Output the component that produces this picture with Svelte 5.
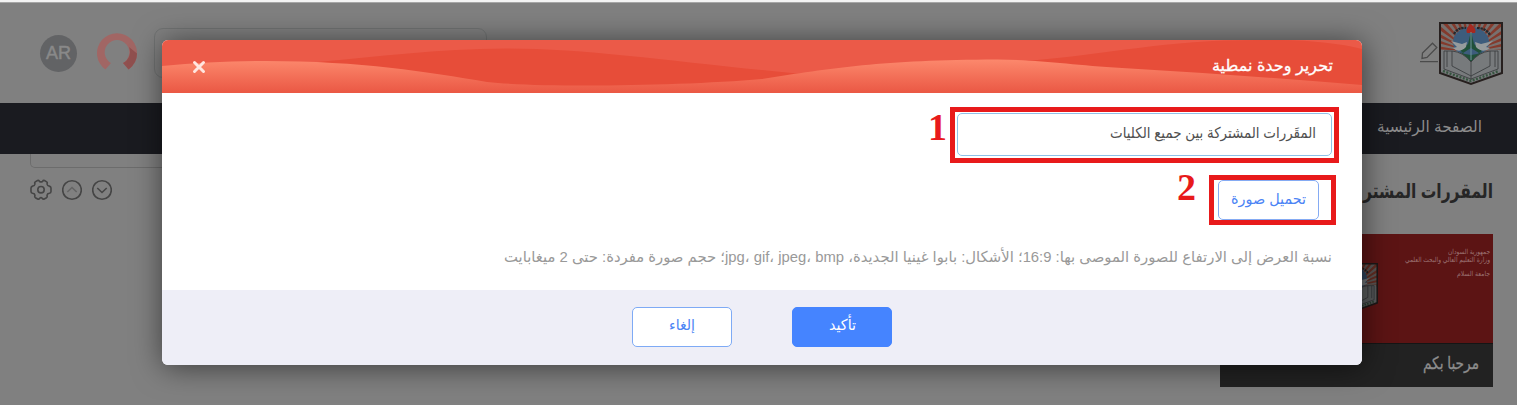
<script>
  const fileHint =
    'نسبة العرض إلى الارتفاع للصورة الموصى بها: 16:9؛ الأشكال: بابوا غينيا الجديدة، jpg، gif، jpeg، bmp؛ حجم صورة مفردة: حتى 2 ميغابايت';
  const courseName = 'المقَررات المشتركة بين جميع الكليات';
  const rays = Array.from({ length: 19 }, (_, i) => {
    const a = Math.PI * (i / 18);
    const b = a + 0.085;
    return `M32 30 L${32 + 50 * Math.cos(a)} ${30 - 50 * Math.sin(a)} L${32 + 50 * Math.cos(b)} ${30 - 50 * Math.sin(b)}Z`;
  }).join('');
</script>

{#snippet label(text, width, size, height, base)}
  <svg class="label" {width} {height} viewBox="0 0 {width} {height}">
    <text x={width} y={base} font-size={size} textLength={width} lengthAdjust="spacingAndGlyphs">{text}</text>
  </svg>
{/snippet}

{#snippet emblem()}
  <svg class="emblem" width="64" height="64" viewBox="0 0 64 64">
    <clipPath id="shield"><path d="M1 1H63V51L32 62 1 51Z" /></clipPath>
    <g clip-path="url(#shield)">
      <rect width="64" height="64" fill="#77716f" />
      <path d={rays} fill="#843a2c" />
      <ellipse cx="32" cy="20" rx="18" ry="15" fill="#3d5c7c" />
      <path d="M15 12Q19 5 27 6M38 6Q47 6 51 13" fill="none" stroke="#22282e" stroke-width="2.2" stroke-dasharray="2.4 .8" />
      <path d="M32 9L35 22 43 29 40 31 32 26 24 31 21 28 29 22Z" fill="#205039" />
      <path d="M21 30Q32 36 43 30L32 41Z" fill="#205039" />
      <path d="M28 11Q26 6 32 2 38 7 36 11Z" fill="#a52920" />
      <path d="M12 19L23 22 28 20 27 25Q20 32 14 26L18 25ZM54 19L42 22 36 20 37 25Q44 32 51 26L47 25Z" fill="#969b9d" />
      <path d="M32 10V38" stroke="#71949b" />
      <path d="M2 28H13Q24 30 32 40 40 30 51 28H62V51L32 62 2 51Z" fill="#777a7c" />
      <path d="M5 29V47L32 57M8 29V45M13 29V44L32 54M5 29H13Q24 30 32 40 40 30 51 29H59V47L32 57M56 29V45M51 29V44L32 54M32 40V58" fill="none" stroke="#3c3f42" stroke-width=".9" />
      <path d="M4 49L32 59 60 49" fill="none" stroke="#36543f" stroke-width="2.4" stroke-dasharray="2 1.5" />
    </g>
    <path d="M1 1H63V51L32 62 1 51Z" fill="none" stroke="#27201f" stroke-width="2" />
  </svg>
{/snippet}

<div class="page">
  <div class="strip"></div>
  <header>
    <div class="avatar">AR</div>
    <svg class="ring" width="40" height="38" viewBox="0 0 40 38">
      <path d="M8.4 36.5A20 20 0 1 1 31.6 36.5L26 30A12.3 12.3 0 1 0 14 30Z" fill="#a16664" />
      <path d="M32 14A12.3 12.3 0 0 1 26 30L31.6 36.5Q40 30 40 20.5Z" fill="#90504f" />
    </svg>
    <div class="search"></div>
    <div class="brand">
      <svg class="pencil" width="19" height="21" viewBox="0 0 19 21">
        <path d="M2 16.5L2.5 11 12.5 1.2 16.8 5.5 7 15.5ZM0 19.7H18" fill="none" stroke="#4b4b4b" stroke-width="1.3" />
      </svg>
      {@render emblem()}
    </div>
  </header>
  <nav>{@render label('الصفحة الرئيسية', 105, 16, 32, 19)}</nav>
  <div class="panel"></div>
  <div class="section">
    <div class="tools">
      <svg width="22" height="22" viewBox="0 0 22 22">
        <path d="M7.5 1.5Q9 1 9.4 2.3Q11 3.6 12.6 2.3Q13.2 1 14.5 1.5L16.7 2.8Q17.7 3.5 17 5Q17.3 7 19.3 7.1Q21 7.5 21 9V12.5Q21 14 19.3 14.3Q17.2 14.5 17 16.3Q17.6 18 16.5 18.7L14.3 20Q13 20.5 12.2 19.3Q11 18 9.7 19.3Q9 20.5 7.6 20L5.4 18.7Q4.3 18 5 16.3Q4.8 14.5 2.6 14.3Q1 14 1 12.5V9Q1 7.5 2.6 7.1Q4.7 7 5 5Q4.3 3.5 5.3 2.8Z" />
        <circle cx="11" cy="10.7" r="3.2" />
      </svg>
      <svg width="20" height="22" viewBox="0 0 20 22"><circle cx="10" cy="11" r="9.3" /><path class="faint" d="M5.3 13L10 8.5 14.7 13" /></svg>
      <svg width="20" height="22" viewBox="0 0 20 22"><circle cx="10" cy="11" r="9.3" /><path d="M5.3 9L10 13.5 14.7 9" /></svg>
    </div>
    <h1>{@render label('المقررات المشتر', 130, 20, 36, 24)}</h1>
  </div>
  <article>
    <div class="cover">
      <div class="seal">{@render emblem()}</div>
      <div class="lines">
        {@render label('جمهورية السودان', 42, 7, 8, 6)}
        {@render label('وزارة التعليم العالي والبحث العلمي', 85, 7, 14, 6)}
        {@render label('جامعة السلام', 33, 7, 10, 6)}
      </div>
    </div>
    <div class="caption">{@render label('مرحبا بكم', 56, 17, 40, 25)}</div>
  </article>
</div>

<div class="dialog">
  <div class="titlebar">
    <svg class="waves" width="1200" height="53" viewBox="0 0 1200 53">
      <defs>
        <linearGradient id="glow" gradientUnits="userSpaceOnUse" x1="0" y1="19" x2="0" y2="52">
          <stop offset="0" stop-color="#fc896d" /><stop offset="1" stop-color="#eb5945" />
        </linearGradient>
      </defs>
      <path d="M155 22C215 17 275 8.5 344 8.5C430 8.5 520 23 640 34V46H350L165 23Z" fill="#e74d39" />
      <path d="M865 21C950 14 1000 0 1097 0Q1160 -1 1200 9V50H900Z" fill="#e74d39" />
      <path d="M0 26Q50 21 103 21C200 21 265 32 325 42C380 48 520 46 600 39C670 28 720 20 835 19.5C880 20 910 25 960 28Q1080 35 1200 45V53H0Z" fill="url(#glow)" />
    </svg>
    <svg class="close" width="14" height="14" viewBox="0 0 14 14"><path d="M2.5 2.5L11.5 11.5M11.5 2.5L2.5 11.5" /></svg>
    {@render label('تحرير وحدة نمطية', 121, 16, 34, 23)}
  </div>
  <div class="body">
    <div class="field">
      {@render label(courseName, 206, 15, 34, 19)}
      <div class="mark mark-field"></div>
      <b class="step step-one">1</b>
    </div>
    <div class="upload">
      {@render label('تحميل صورة', 75, 15, 34, 19)}
      <div class="mark mark-upload"></div>
      <b class="step step-two">2</b>
    </div>
    <div class="hint">{@render label(fileHint, 828, 15, 26, 18)}</div>
  </div>
  <footer>
    <div class="btn">{@render label('إلغاء', 26, 15, 34, 21)}</div>
    <div class="btn primary">{@render label('تأكيد', 27, 15, 34, 21)}</div>
  </footer>
</div>

<style>
  :global(body) { background: #808080; overflow: hidden; }
  * { box-sizing: border-box; }
  .label { display: block; overflow: visible; flex: none; fill: currentColor; direction: rtl; font-family: "Liberation Sans", "DejaVu Sans", sans-serif; }
  .page { width: 1517px; height: 405px; overflow: hidden; background: #808080; font-family: "Liberation Sans", Arial, sans-serif; }
  .strip { height: 3px; background: #f3f3f3; border-bottom: 1px solid #a6a6a6; }
  header { height: 100px; display: flex; padding: 19px 14px 0 40px; }
  .avatar { width: 37px; height: 37px; margin-top: 13px; border-radius: 50%; background: #626365; color: #898989; font-size: 18px; line-height: 36px; text-align: center; -webkit-text-stroke: .5px #898989; }
  .ring { margin: 11px 0 0 20px; }
  .search { width: 333px; height: 50px; margin: 6px 0 0 17px; border: 1px solid #717373; border-radius: 9px; }
  .brand { display: flex; margin-left: auto; }
  .pencil { margin: 20px 0 0; }
  .emblem { display: block; flex: none; }
  nav { height: 51px; background: #1a1b20; color: #8c8c8c; display: flex; justify-content: flex-end; padding: 10px 35px 0 0; }
  .panel { height: 14px; margin: 0 24px 0 30px; border: 1px solid #6c6c6c; border-top: 0; border-radius: 0 0 5px 5px; }
  .panel { width: 600px; }
  .section { display: flex; justify-content: space-between; height: 66px; padding: 6px 24px 0 30px; }
  .tools { display: flex; gap: 10px; padding-top: 5px; }
  .tools svg { fill: none; stroke: #454545; stroke-width: 1.6; }
  .tools .faint { stroke: #646464; }
  h1 { margin: 0; color: #262626; font-weight: bold; }
  article { width: 273px; height: 153px; margin-left: 1220px; }
  .cover { display: flex; justify-content: space-between; height: 109px; background: #5c1414; color: #9b7272; padding: 14px 3px 0 108px; }
  .seal { padding-top: 15px; filter: brightness(.75); }
  .seal .emblem { width: 50px; height: 50px; }
  .lines { display: flex; flex-direction: column; align-items: flex-end; }
  .caption { display: flex; justify-content: flex-end; height: 44px; background: #222; border-top: 1px solid #151515; color: #8d8d8d; padding-right: 14px; }
  .caption .label, .titlebar .label { stroke: currentColor; stroke-width: .3px; }
  .dialog { position: absolute; left: 162px; top: 40px; width: 1200px; height: 325px; border-radius: 6px; overflow: hidden; background: #fff; box-shadow: 1px 2px 30px rgba(0, 0, 0, .55); }
  .titlebar { position: relative; height: 53px; display: flex; justify-content: space-between; padding: 8px 29px 0 30px; background: #eb5a48; color: #fff; }
  .titlebar > :global(*) { position: relative; }
  .titlebar .waves { position: absolute; left: 0; top: 0; }
  .close { margin-top: 12px; fill: none; stroke: #ffe5df; stroke-width: 3; stroke-linecap: round; }
  .body { height: 197px; display: flex; flex-direction: column; align-items: flex-end; padding: 20px 30px 0; }
  .field { position: relative; display: flex; justify-content: flex-end; width: 375px; height: 43px; padding: 5px 15px 0; border: 1px solid #8fc1e8; border-radius: 5px; color: #505050; }
  .upload { position: relative; width: 101px; height: 40px; margin: 24px 13px 0 0; padding: 4px 12px 0; border: 1px solid #85abf3; border-radius: 5px; color: #4c84f5; }
  .mark { position: absolute; border: 5px solid #e81a1b; }
  .mark-field { left: -8px; top: -7px; width: 389px; height: 56px; }
  .mark-upload { left: -10px; top: -6px; width: 127px; height: 50px; }
  .step { position: absolute; font: bold 38px/38px "Liberation Serif", "Times New Roman", serif; color: #e81a1b; }
  .step-one { left: -30px; top: -6px; }
  .step-two { left: -42px; top: -13px; }
  .hint { margin-top: 24px; color: #999; }
  footer { height: 75px; display: flex; justify-content: center; gap: 60px; padding-top: 17px; background: #eeeef7; }
  .btn { width: 100px; height: 40px; display: flex; justify-content: center; padding-top: 1px; background: #fff; border: 1px solid #7eaaf5; border-radius: 5px; color: #4c84f5; }
  .primary { background: #4584ff; border-color: #4584ff; color: #fff; }
</style>
